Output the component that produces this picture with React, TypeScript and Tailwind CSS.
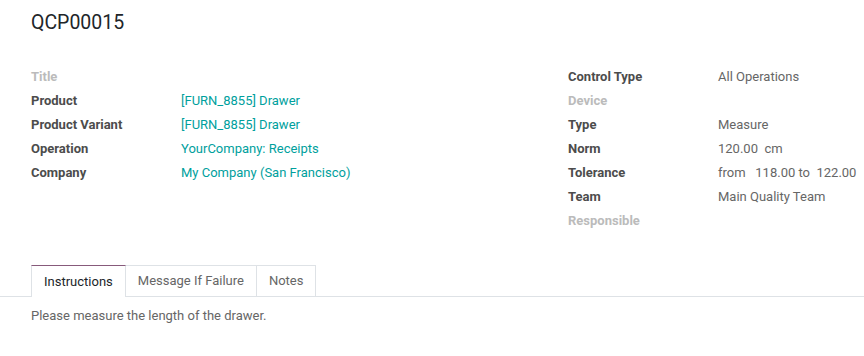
const leftRows: { label: string; value?: string; muted?: boolean }[] = [
  { label: 'Title', muted: true },
  { label: 'Product', value: '[FURN_8855] Drawer' },
  { label: 'Product Variant', value: '[FURN_8855] Drawer' },
  { label: 'Operation', value: 'YourCompany: Receipts' },
  { label: 'Company', value: 'My Company (San Francisco)' },
];

const rightRows: { label: string; value?: string; muted?: boolean }[] = [
  { label: 'Control Type', value: 'All Operations' },
  { label: 'Device', muted: true },
  { label: 'Type', value: 'Measure' },
  { label: 'Norm', value: '120.00\u00a0 cm' },
  { label: 'Tolerance', value: 'from\u00a0\u00a0 118.00 to\u00a0 122.00' },
  { label: 'Team', value: 'Main Quality Team' },
  { label: 'Responsible', muted: true },
];

function Field({ label, value, muted, link }: { label: string; value?: string; muted?: boolean; link?: boolean }) {
  return (
    <div className="flex h-[24px] items-center">
      <div className={`w-[150px] shrink-0 font-bold ${muted ? 'text-[#bbbbbb]' : 'text-[#4c4c4c]'}`}>{label}</div>
      {value && <div className={link ? 'text-[#00a09d]' : 'text-[#666666]'}>{value}</div>}
    </div>
  );
}

export default function App() {
  const tabs = ['Instructions', 'Message If Failure', 'Notes'];

  return (
    <div className="w-[864px] h-[356px] overflow-hidden bg-white font-['Roboto',sans-serif] text-[13px]">
      <div className="px-[31px] pt-[10px]">
        <h1 className="text-[19.5px] leading-[26px] text-[#212529]">QCP00015</h1>
      </div>

      <div className="mt-[29px] flex pl-[31px]">
        <div className="w-[537px]">
          {leftRows.map((r) => (
            <Field key={r.label} {...r} link />
          ))}
        </div>
        <div>
          {rightRows.map((r) => (
            <Field key={r.label} {...r} />
          ))}
        </div>
      </div>

      <div className="mt-[32px] flex border-b border-[#dee2e6] pl-[31px]">
        {tabs.map((t, i) => (
          <div
            key={t}
            className={
              i === 0
                ? '-mb-px flex h-[32px] items-center border border-b-0 border-[#dee2e6] border-t-[#875a7b] bg-white px-[12px] text-[#212529]'
                : '-mb-px flex h-[32px] items-center border border-l-0 border-[#dee2e6] px-[12px] text-[#666666]'
            }
          >
            {t}
          </div>
        ))}
      </div>

      <p className="px-[31px] pt-[10px] leading-[18px] text-[#666666]">Please measure the length of the drawer.</p>
    </div>
  );
}
